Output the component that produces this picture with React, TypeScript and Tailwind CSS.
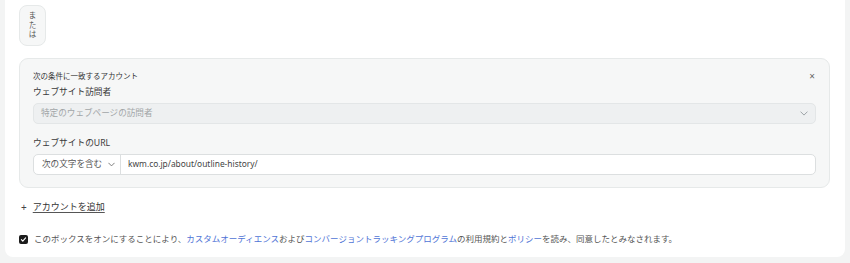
import React from 'react';

const font = { fontFamily: '"Noto Sans", "Noto Sans CJK JP", sans-serif' };

const Chevron: React.FC<{ className?: string }> = ({ className }) => (
  <svg viewBox="0 0 10 6" className={className} fill="none" stroke="currentColor" strokeWidth="1.2">
    <path d="M1 1l4 4 4-4" strokeLinecap="round" strokeLinejoin="round" />
  </svg>
);

const App: React.FC = () => {
  return (
    <div className="min-h-[263px] w-[850px] bg-[#f3f4f4] px-[5px] text-[#333]" style={font}>
      <div className="h-[257px] rounded-b-lg bg-white px-[14px] pt-[5px]">
        {/* または */}
        <div className="flex h-[41px] w-[27px] flex-col items-center justify-center rounded-lg border border-[#e6e9e9] bg-[#f6f7f7] text-[7.5px] leading-[9.5px] text-[#555]">
          <span>ま</span>
          <span>た</span>
          <span>は</span>
        </div>

        {/* condition box */}
        <div className="mt-3 h-[130px] w-[811px] rounded-[9px] border border-[#e6e9e9] bg-[#f6f7f7] px-[13px] pt-[11px]">
          <div className="flex items-center justify-between">
            <span className="text-[7.5px] leading-[12px] text-[#333]">次の条件に一致するアカウント</span>
            <span className="mr-[1px] text-[10px] leading-[12px] text-[#666]">×</span>
          </div>
          <div className="mt-[4px] text-[8.7px] leading-[12px] text-[#3a3a3a]">ウェブサイト訪問者</div>
          <div className="mt-[5px] flex h-[21px] items-center justify-between rounded-[5px] border border-[#e3e6e7] bg-[#eef0f1] pl-[7px] pr-[7px]">
            <span className="text-[8.6px] text-[#a2a6a8]">特定のウェブページの訪問者</span>
            <Chevron className="h-[5px] w-[8px] text-[#9aa0a3]" />
          </div>
          <div className="mt-[13px] text-[8.7px] leading-[12px] text-[#3a3a3a]">ウェブサイトのURL</div>
          <div className="mt-[5px] flex h-[21px] overflow-hidden rounded-[5px] border border-[#dcdfe0] bg-white">
            <div className="flex w-[87px] items-center gap-[6px] border-r border-[#dcdfe0] pl-[8px]">
              <span className="text-[8.6px] text-[#555]">次の文字を含む</span>
              <Chevron className="h-[5px] w-[7px] text-[#666]" />
            </div>
            <div className="flex items-center pl-[7px] text-[8.4px] text-[#444]">kwm.co.jp/about/outline-history/</div>
          </div>
        </div>

        {/* add account */}
        <div className="mt-[13px] flex items-center gap-[6px] pl-[2px] text-[9px] leading-[12px]">
          <span className="text-[10px] text-[#444]">+</span>
          <span className="text-[#333] underline decoration-[#555] underline-offset-2">アカウントを追加</span>
        </div>

        {/* consent */}
        <div className="mt-[20px] flex items-center gap-[6px] text-[8.5px] leading-[12px] text-[#555]">
          <span className="flex h-[9px] w-[9px] items-center justify-center rounded-[2px] bg-[#1c1c1c]">
            <svg viewBox="0 0 10 10" className="h-[7px] w-[7px]" fill="none" stroke="white" strokeWidth="1.6">
              <path d="M2 5.2l2 2 4-4.4" strokeLinecap="round" strokeLinejoin="round" />
            </svg>
          </span>
          <span>
            このボックスをオンにすることにより、
            <span className="text-[#4f74d6]">カスタムオーディエンス</span>
            および
            <span className="text-[#4f74d6]">コンバージョントラッキングプログラム</span>
            の利用規約と
            <span className="text-[#4f74d6]">ポリシー</span>
            を読み、同意したとみなされます。
          </span>
        </div>
      </div>
    </div>
  );
};

export default App;
